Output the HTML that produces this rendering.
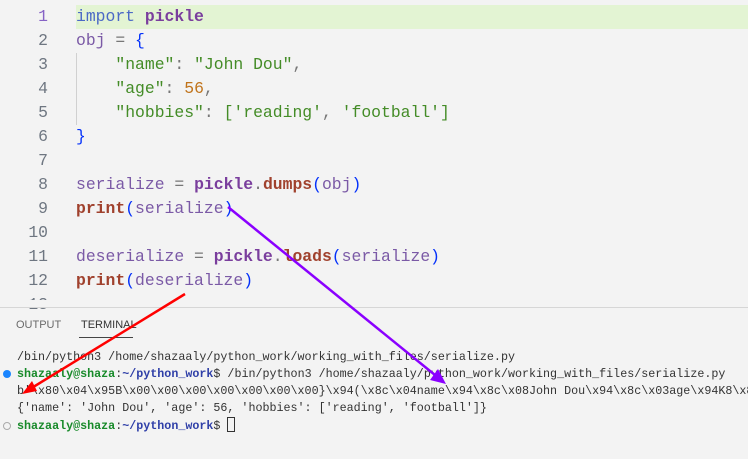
<!DOCTYPE html>
<html><head><style>
body{margin:0;width:748px;height:459px;background:#f3f3f3;overflow:hidden;position:relative;font-family:"Liberation Mono",monospace}
.ed{position:absolute;left:0;top:5px;width:748px}
.ln{height:24px;line-height:24px;font-size:16.4px;position:relative;white-space:pre}
.n{position:absolute;right:700px;color:#6e7681;text-align:right}
.c{position:absolute;left:76px}
.hl{position:absolute;left:76px;right:0;top:0;height:24px;background:#e3f4d3}
.v{color:#7b5aa6}.k{color:#4b69c6}.b{font-weight:bold}.p{color:#7a3e9d;font-weight:bold}.f{color:#a0412d;font-weight:bold}
.s{color:#448c27}.num{color:#c0731a}.br{color:#0431fa}.o{color:#777}
.guide{position:absolute;left:76px;top:53px;width:1px;height:72px;background:#d0d0d0}
.div{position:absolute;left:0;right:0;top:307px;height:1px;background:#d6d6d6}
.tab{position:absolute;top:319px;font-family:"Liberation Sans",sans-serif;font-size:11px;color:#6a6a6a}
.tl{position:absolute;left:17px;white-space:pre;font-size:11.7px;line-height:17px;color:#333}
.g{color:#188a2a;font-weight:bold}.bl{color:#2f3fa8;font-weight:bold}
</style></head><body>
<div class="ed">
<div class="ln"><div class="hl"></div><span class="n" style="color:#8662c5">1</span><span class="c"><span class="k">import</span> <span class="p">pickle</span></span></div>
<div class="ln"><span class="n">2</span><span class="c"><span class="v">obj</span> <span class="o">=</span> <span class="br">{</span></span></div>
<div class="ln"><span class="n">3</span><span class="c">    <span class="s">"name"</span><span class="o">:</span> <span class="s">"John Dou"</span><span class="o">,</span></span></div>
<div class="ln"><span class="n">4</span><span class="c">    <span class="s">"age"</span><span class="o">:</span> <span class="num">56</span><span class="o">,</span></span></div>
<div class="ln"><span class="n">5</span><span class="c">    <span class="s">"hobbies"</span><span class="o">:</span> <span class="s">[</span><span class="s">'reading'</span><span class="o">,</span> <span class="s">'football'</span><span class="s">]</span></span></div>
<div class="ln"><span class="n">6</span><span class="c"><span class="br">}</span></span></div>
<div class="ln"><span class="n">7</span></div>
<div class="ln"><span class="n">8</span><span class="c"><span class="v">serialize</span> <span class="o">=</span> <span class="p">pickle</span><span class="o">.</span><span class="f">dumps</span><span class="br">(</span><span class="v">obj</span><span class="br">)</span></span></div>
<div class="ln"><span class="n">9</span><span class="c"><span class="f">print</span><span class="br">(</span><span class="v">serialize</span><span class="br">)</span></span></div>
<div class="ln"><span class="n">10</span></div>
<div class="ln"><span class="n">11</span><span class="c"><span class="v">deserialize</span> <span class="o">=</span> <span class="p">pickle</span><span class="o">.</span><span class="f">loads</span><span class="br">(</span><span class="v">serialize</span><span class="br">)</span></span></div>
<div class="ln"><span class="n">12</span><span class="c"><span class="f">print</span><span class="br">(</span><span class="v">deserialize</span><span class="br">)</span></span></div>
<div class="ln"><span class="n">13</span></div>
</div>
<div class="guide"></div>
<div class="div" style="background:#f3f3f3;top:300px;height:7px"></div>
<div class="div"></div>
<div class="tab" style="left:16px">OUTPUT</div>
<div class="tab" style="left:81px;color:#333">TERMINAL</div>
<div style="position:absolute;left:79px;top:337px;width:54px;height:1px;background:#444"></div>
<div class="tl" style="top:349px">/bin/python3 /home/shazaaly/python_work/working_with_files/serialize.py</div>
<div class="tl" style="top:366px"><span class="g">shazaaly@shaza</span>:<span class="bl">~/python_work</span>$ /bin/python3 /home/shazaaly/python_work/working_with_files/serialize.py</div>
<div class="tl" style="top:383px">b'\x80\x04\x95B\x00\x00\x00\x00\x00\x00\x00}\x94(\x8c\x04name\x94\x8c\x08John Dou\x94\x8c\x03age\x94K8\x8c</div>
<div class="tl" style="top:400px">{'name': 'John Dou', 'age': 56, 'hobbies': ['reading', 'football']}</div>
<div class="tl" style="top:417px"><span class="g">shazaaly@shaza</span>:<span class="bl">~/python_work</span>$ <span style="display:inline-block;width:6px;height:13px;border:1px solid #333;vertical-align:-3px"></span></div>
<div style="position:absolute;left:3px;top:370px;width:8px;height:8px;border-radius:50%;background:#1a85ff"></div>
<div style="position:absolute;left:3px;top:422px;width:6px;height:6px;border-radius:50%;border:1px solid #aaa"></div>
<svg width="748" height="459" style="position:absolute;left:0;top:0">
<line x1="185" y1="294" x2="30" y2="389" stroke="#ff0000" stroke-width="2.5"/>
<polygon points="22,394 32,381 37,391" fill="#ff0000"/>
<line x1="228" y1="207" x2="435" y2="375" stroke="#8a00ff" stroke-width="2.5"/>
<polygon points="446,384 430,380 438,369" fill="#8a00ff"/>
</svg>
</body></html>
